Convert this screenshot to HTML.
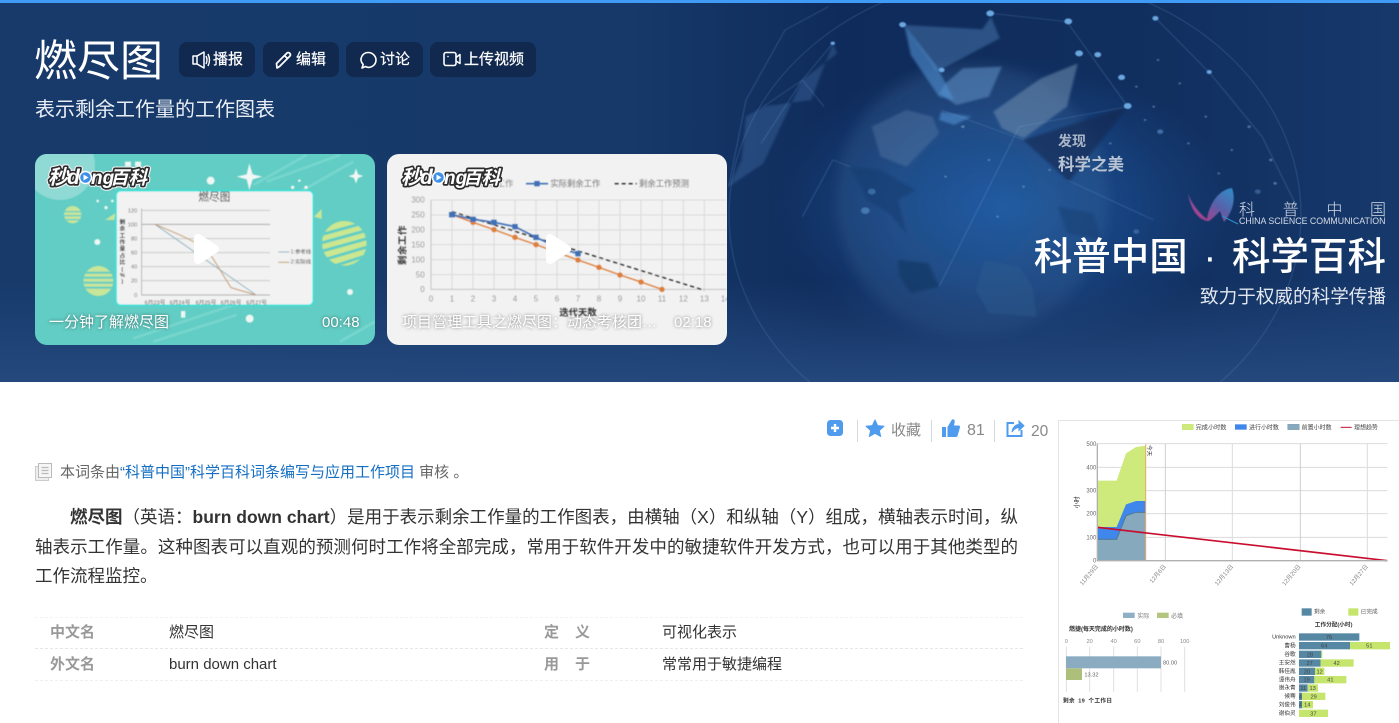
<!DOCTYPE html>
<html lang="zh"><head><meta charset="utf-8"><title>燃尽图</title>
<style>
*{box-sizing:border-box}
html,body{margin:0;padding:0;width:1399px;height:723px;overflow:hidden;background:#fff}
body{position:relative;font-family:"Liberation Sans","Noto Sans CJK SC",sans-serif;color:#333}
.a{position:absolute;white-space:nowrap}
.hero{position:absolute;left:0;top:0;width:1399px;height:382px;overflow:hidden;background:#163a6b}
.btn{position:absolute;top:42px;height:35px;border-radius:8px;background:#11294f}
.btxt{position:absolute;top:42px;line-height:36px;font-size:15px;color:#fff;white-space:nowrap;-webkit-text-stroke:.2px #fff}
.ct{position:absolute;color:#fff;font-size:15px;line-height:20px;white-space:nowrap;text-shadow:0 0 3px rgba(0,0,0,.5)}
.line{position:absolute;left:35px;width:983px;font-size:17.5px;line-height:30px;height:30px;color:#333;text-align:justify;text-align-last:justify;white-space:nowrap}
.lb{position:absolute;font-size:15px;font-weight:bold;color:#999;line-height:20px;white-space:nowrap}
.val{position:absolute;font-size:15px;color:#333;line-height:20px;white-space:nowrap}
.dot{position:absolute;left:35px;width:988px;height:0;border-top:1px dashed #e6e6e6}
.sep{position:absolute;top:420px;width:1px;height:22px;background:#d5d8dc}
svg text{font-family:"Liberation Sans","Noto Sans CJK SC",sans-serif}
</style></head><body>
<div class="hero">
<svg width="1399" height="382" viewBox="0 0 1399 382" style="position:absolute;left:0;top:0">
<defs>
<linearGradient id="bg" x1="0" x2="1" y1="0" y2="0"><stop offset="0" stop-color="#173a6b"/><stop offset=".45" stop-color="#16396a"/><stop offset=".6" stop-color="#0f2b5b"/><stop offset=".8" stop-color="#102e5e"/><stop offset="1" stop-color="#16386b"/></linearGradient>
<linearGradient id="bot" x1="0" x2="0" y1="0" y2="1"><stop offset="0" stop-color="#25497e" stop-opacity="0"/><stop offset="1" stop-color="#25497e" stop-opacity=".95"/></linearGradient>
<radialGradient id="glow"><stop offset="0" stop-color="#1f5ea8" stop-opacity=".95"/><stop offset=".55" stop-color="#1b4f93" stop-opacity=".6"/><stop offset="1" stop-color="#1b4a8a" stop-opacity="0"/></radialGradient>
<radialGradient id="globe" cx=".5" cy=".5" r=".5"><stop offset="0" stop-color="#1f5aa0" stop-opacity=".4"/><stop offset=".8" stop-color="#3a6496" stop-opacity=".28"/><stop offset="1" stop-color="#4a709c" stop-opacity=".22"/></radialGradient>
<filter id="b1" x="-10%" y="-10%" width="120%" height="120%"><feGaussianBlur stdDeviation="3"/></filter>
<filter id="b05"><feGaussianBlur stdDeviation="1.2"/></filter>
<filter id="bw"><feGaussianBlur stdDeviation=".4"/></filter>
<filter id="bg8" x="-20%" y="-20%" width="140%" height="140%"><feGaussianBlur stdDeviation="6"/></filter>
<clipPath id="c1"><rect x="35" y="154" width="340" height="191" rx="12"/></clipPath>
<clipPath id="c2"><rect x="387" y="154" width="340" height="191" rx="12"/></clipPath>
<linearGradient id="wing" x1="0" x2="1" y1="1" y2="0"><stop offset="0" stop-color="#d6327f"/><stop offset=".55" stop-color="#5a5fa8"/><stop offset="1" stop-color="#2e8fc9"/></linearGradient>
</defs>
<rect width="1399" height="382" fill="url(#bg)"/>
<ellipse cx="1002" cy="207" rx="230" ry="150" fill="url(#glow)"/>
<circle cx="972" cy="200" r="136" fill="url(#globe)" filter="url(#bg8)"/>
<rect x="0" y="280" width="1399" height="102" fill="url(#bot)"/>
<!-- globe -->
<g transform="translate(720 0) scale(.4337 .3333)" filter="url(#b1)">
<path d="M520 250L560 205 650 200 620 290 545 315 505 280Z" fill="#5c8bc0" fill-opacity=".6"/>
<path d="M630 335L690 280 740 235 825 190 800 320 700 415 650 385Z" fill="#6f8eaf" fill-opacity=".55"/>
<path d="M425 75L500 200 540 300 505 290 440 165Z" fill="#4f8fd0" fill-opacity=".6"/>
<path d="M425 75L605 88 625 50 645 115 500 215Z" fill="#5a8fc9" fill-opacity=".38"/>
<path d="M700 420L940 320 805 545Z" fill="#10274f" fill-opacity=".6"/>
<path d="M350 380L430 330 490 350 505 400 430 500 370 470Z" fill="#6a8cb0" fill-opacity=".32"/>
<path d="M510 335L580 350 540 375 505 360Z" fill="#4f8fd0" fill-opacity=".6"/>
<path d="M300 500L370 510 450 570 410 600 430 700 390 640 340 600Z" fill="#143a72" fill-opacity=".6"/>
<path d="M410 780L480 790 505 860 440 880 415 830Z" fill="#153765" fill-opacity=".7"/>
<path d="M610 780L690 800 720 860 730 950 620 940 590 870Z" fill="#2f5b8e" fill-opacity=".45"/>
<path d="M780 620L860 640 880 720 800 700Z" fill="#173c70" fill-opacity=".5"/>
<path d="M260 130L210 300 100 320 60 350 50 480 20 560 100 490 190 240 270 160Z" fill="#5a90c8" fill-opacity=".26"/>
</g>
<g transform="translate(720 0) scale(.4337 .3333)" filter="url(#b05)">
<path d="M250 20L150 90 60 300 20 560M260 130L190 240 100 320M190 240L240 320M95 430L190 240M505 860L690 380 940 320M800 540L1000 660M700 420L510 330M1005 55L1130 220 1250 410 1330 620M625 40L800 65 940 320M190 650L260 480 300 500" fill="none" stroke="#7fb0e2" stroke-opacity=".3" stroke-width="2"/>
<g fill="#6aa6e0">
<circle cx="623" cy="40" r="9"/><circle cx="803" cy="64" r="9"/><circle cx="421" cy="74" r="8"/><circle cx="828" cy="160" r="9"/><circle cx="871" cy="164" r="8"/><circle cx="926" cy="232" r="8"/><circle cx="940" cy="318" r="9"/><circle cx="511" cy="210" r="7"/><circle cx="1004" cy="55" r="7"/><circle cx="1128" cy="216" r="6"/><circle cx="260" cy="130" r="5"/><circle cx="335" cy="632" r="10" fill-opacity=".5"/><circle cx="350" cy="575" r="9" fill-opacity=".4"/><circle cx="1240" cy="575" r="7" fill-opacity=".35"/><circle cx="1015" cy="395" r="7" fill-opacity=".5"/><circle cx="960" cy="695" r="7" fill-opacity=".35"/>
</g>
<g fill="#9cc4ea" fill-opacity=".45">
<circle cx="960" cy="260" r="3"/><circle cx="1000" cy="320" r="3"/><circle cx="1060" cy="250" r="3"/><circle cx="1080" cy="430" r="3"/><circle cx="1120" cy="350" r="3"/><circle cx="1180" cy="450" r="3"/><circle cx="1010" cy="180" r="3"/><circle cx="900" cy="430" r="3"/><circle cx="880" cy="500" r="3"/><circle cx="1150" cy="520" r="3"/><circle cx="1220" cy="380" r="4"/><circle cx="1270" cy="480" r="4"/><circle cx="1280" cy="550" r="4"/><circle cx="560" cy="380" r="4"/><circle cx="620" cy="480" r="3"/><circle cx="520" cy="530" r="3"/><circle cx="700" cy="560" r="3"/><circle cx="760" cy="510" r="3"/><circle cx="640" cy="650" r="3"/><circle cx="980" cy="360" r="3"/>
</g>
</g>
<ellipse cx="1015" cy="215" rx="286" ry="240" fill="none" stroke="#6f9fd1" stroke-opacity=".16" stroke-width="1.5"/>
<!-- 科普 logo wing -->
<path d="M1188 193C1192 206 1203 216 1207 219 1209 206 1217 190 1232 188 1237 202 1230 215 1224 222L1220 211C1213 218 1209 222 1207 221 1199 219 1191 212 1188 193Z" fill="url(#wing)" filter="url(#bw)"/>
<path d="M1222 216L1238 224" stroke="#2e8fc9" stroke-width="1"/>
<!-- card1 -->
<g clip-path="url(#c1)">
<rect x="35" y="154" width="340" height="191" fill="#62cdc4"/>
<g transform="translate(20 145) scale(.33333)" filter="url(#b05)">
<circle cx="120" cy="60" r="105" fill="#8fdad5"/>
<g stroke="#85dcd4" stroke-width="8" stroke-opacity=".6"><path d="M700 120L860 30M740 110L960 30M840 140L1000 50M340 580L640 480M400 590L650 510M960 590L1065 530"/></g>
<path d="M650 95L680 88 688 55 698 88 727 95 698 103 688 135 680 103Z" fill="#f2f7f5"/>
<path d="M985 93L1002 88 1008 70 1014 88 1030 93 1014 99 1008 116 1002 99Z" fill="#f2f7f5"/>
<g fill="#eef7f4"><circle cx="232" cy="291" r="9"/><circle cx="990" cy="441" r="9"/><circle cx="689" cy="521" r="12"/><circle cx="572" cy="107" r="12"/><rect x="483" y="498" width="13" height="20"/><circle cx="233" cy="168" r="4"/><circle cx="258" cy="188" r="5"/><circle cx="277" cy="168" r="4"/><rect x="315" y="50" width="18" height="14"/><rect x="345" y="50" width="18" height="14"/><circle cx="838" cy="107" r="4"/><circle cx="818" cy="127" r="5"/><circle cx="858" cy="127" r="5"/></g>
<circle cx="158" cy="209" r="26" fill="#c8e59a"/>
<circle cx="235" cy="408" r="45" fill="#c8e59a"/>
<g fill="#62cdc4"><rect x="130" y="198" width="56" height="4"/><rect x="130" y="210" width="56" height="4"/><rect x="130" y="222" width="56" height="4"/><rect x="190" y="380" width="90" height="6"/><rect x="190" y="395" width="90" height="6"/><rect x="190" y="410" width="90" height="6"/><rect x="190" y="425" width="90" height="6"/></g>
<circle cx="973" cy="295" r="67" fill="#cbe78f"/>
<g stroke="#62cdc4" stroke-width="9"><path d="M900 270L1045 230M900 295L1045 255M900 320L1045 280M910 345L1045 305M920 370L1045 330"/></g>
<path d="M255 225L285 205 283 225Z" fill="#c8e59a"/><path d="M882 215L905 192 905 222Z" fill="#c8e59a"/>
<rect x="288" y="137" width="592" height="344" rx="14" fill="#f1f2f1" stroke="#37e3dc" stroke-width="5"/>
<text x="583" y="166" font-size="32" text-anchor="middle" fill="#222">燃尽图</text>
<g stroke="#c9c9c9" stroke-width="3"><path d="M365 196H750M365 281H750M365 323H750M365 365H750M365 407H750"/></g>
<path d="M365 238H750" stroke="#a6a6a6" stroke-width="3"/>
<path d="M365 190V450H750" fill="none" stroke="#999" stroke-width="2"/>
<path d="M405 238L708 450" stroke="#8db3c0" stroke-width="3" fill="none"/>
<path d="M405 238L485 272 560 310 633 428 708 450" stroke="#c79a68" stroke-width="3" fill="none"/>
<g font-size="17" fill="#666" text-anchor="end"><text x="352" y="202">120</text><text x="352" y="244">100</text><text x="352" y="287">80</text><text x="352" y="329">60</text><text x="352" y="371">40</text><text x="352" y="413">20</text><text x="352" y="456">0</text></g>
<g font-size="17" fill="#222" font-weight="bold" text-anchor="middle"><text x="307" y="237">剩</text><text x="307" y="257">余</text><text x="307" y="277">工</text><text x="307" y="297">作</text><text x="307" y="317">量</text><text x="307" y="337">占</text><text x="307" y="357">比</text><text x="307" y="378">(</text><text x="307" y="396">%</text><text x="307" y="414">)</text></g>
<g font-size="17" fill="#444" text-anchor="middle"><text x="405" y="478">6月23号</text><text x="480" y="478">6月24号</text><text x="558" y="478">6月25号</text><text x="633" y="478">6月26号</text><text x="710" y="478">6月27号</text></g>
<path d="M775 321H808" stroke="#8db3c0" stroke-width="3"/><path d="M775 352H808" stroke="#c79a68" stroke-width="3"/>
<text x="812" y="325" font-size="16" fill="#444">1:参考线</text><text x="812" y="356" font-size="16" fill="#444">2:实际线</text>
</g>
</g>
<!-- card2 -->
<g clip-path="url(#c2)">
<rect x="387" y="154" width="340" height="191" fill="#f2f2f2"/>
<g transform="translate(380 145) scale(.33333)" filter="url(#b05)">
<g stroke="#dadada" stroke-width="3" fill="none">
<path d="M153 165H1040M153 210H1040M153 255H1040M153 299H1040M153 344H1040M153 389H1040"/>
<path d="M216 165V433M279 165V433M342 165V433M405 165V433M468 165V433M531 165V433M594 165V433M657 165V433M720 165V433M783 165V433M846 165V433M910 165V433M973 165V433"/>
</g>
<path d="M153 165V433H1040" fill="none" stroke="#c4c4c4" stroke-width="3"/>
<path d="M216 200L973 436" stroke="#222" stroke-width="4" stroke-dasharray="13 9" fill="none"/>
<path d="M216 209L279 232 342 254 405 277 468 299 531 322 594 345 657 367 720 390 783 411 846 433" fill="none" stroke="#dd7e3a" stroke-width="4"/>
<g fill="#dd7e3a"><circle cx="279" cy="232" r="8"/><circle cx="342" cy="254" r="8"/><circle cx="405" cy="277" r="8"/><circle cx="468" cy="299" r="8"/><circle cx="594" cy="345" r="8"/><circle cx="657" cy="367" r="8"/><circle cx="720" cy="390" r="8"/><circle cx="783" cy="411" r="8"/><circle cx="846" cy="433" r="8"/></g>
<path d="M216 209L279 223 342 232 405 245 468 277 531 306 594 326" fill="none" stroke="#3f6fb5" stroke-width="5"/>
<g fill="#3f6fb5"><rect x="207" y="201" width="18" height="16"/><rect x="271" y="215" width="16" height="16"/><rect x="334" y="224" width="16" height="16"/><rect x="397" y="237" width="16" height="16"/><rect x="460" y="269" width="16" height="16"/><rect x="586" y="318" width="16" height="16"/></g>
<g font-size="24" fill="#9a9a9a" text-anchor="middle"><text x="153" y="469">0</text><text x="216" y="469">1</text><text x="279" y="469">2</text><text x="342" y="469">3</text><text x="405" y="469">4</text><text x="468" y="469">5</text><text x="531" y="469">6</text><text x="594" y="469">7</text><text x="657" y="469">8</text><text x="720" y="469">9</text><text x="783" y="469">10</text><text x="846" y="469">11</text><text x="910" y="469">12</text><text x="973" y="469">13</text><text x="1036" y="469">14</text></g>
<g font-size="24" fill="#9a9a9a" text-anchor="end"><text x="134" y="173">300</text><text x="134" y="218">250</text><text x="134" y="263">200</text><text x="134" y="308">150</text><text x="134" y="352">100</text><text x="134" y="397">50</text><text x="134" y="441">0</text></g>
<text transform="translate(76 360) rotate(-90)" font-size="28" font-weight="bold" fill="#333" letter-spacing="2">剩余工作</text>
<text x="594" y="511" font-size="28" font-weight="bold" fill="#333" text-anchor="middle">迭代天数</text>
<text x="250" y="124" font-size="25" fill="#888">理想剩余工作</text>
<path d="M438 116H504" stroke="#3f6fb5" stroke-width="5"/><rect x="463" y="108" width="16" height="16" fill="#3f6fb5"/>
<text x="511" y="124" font-size="25" fill="#777">实际剩余工作</text>
<path d="M704 116H770" stroke="#222" stroke-width="4" stroke-dasharray="12 9"/>
<text x="777" y="124" font-size="25" fill="#777">剩余工作预测</text>
</g>
</g>
<!-- watermark logos -->
<g id="wm" font-weight="bold" font-style="italic" stroke-linejoin="round">
<g stroke="#f4f4f4" stroke-width="5.500" fill="#f4f4f4">
<text x="48" y="184" font-size="20">秒</text><text x="67" y="184" font-size="21">d</text><text x="91" y="184" font-size="19">ng</text><text x="110" y="184" font-size="18.500">百科</text>
<text x="401" y="184" font-size="20">秒</text><text x="420" y="184" font-size="21">d</text><text x="444" y="184" font-size="19">ng</text><text x="463" y="184" font-size="18.500">百科</text>
</g>
<g stroke="#2d2d2d" stroke-width="3.400" fill="#2d2d2d">
<text x="48" y="184" font-size="20">秒</text><text x="67" y="184" font-size="21">d</text><text x="91" y="184" font-size="19">ng</text><text x="110" y="184" font-size="18.500">百科</text>
<text x="401" y="184" font-size="20">秒</text><text x="420" y="184" font-size="21">d</text><text x="444" y="184" font-size="19">ng</text><text x="463" y="184" font-size="18.500">百科</text>
</g>
<g fill="#fff">
<text x="48" y="184" font-size="20">秒</text><text x="67" y="184" font-size="21">d</text><text x="91" y="184" font-size="19">ng</text><text x="110" y="184" font-size="18.500">百科</text>
<text x="401" y="184" font-size="20">秒</text><text x="420" y="184" font-size="21">d</text><text x="444" y="184" font-size="19">ng</text><text x="463" y="184" font-size="18.500">百科</text>
</g>
</g>
<g><circle cx="85.500" cy="177.500" r="6" fill="#3d8fe8" stroke="#fff" stroke-width="1.500"/><path d="M83.500 174.500L88.500 177.500 83.500 180.500Z" fill="#fff"/>
<circle cx="438.500" cy="177.500" r="6" fill="#3d8fe8" stroke="#fff" stroke-width="1.500"/><path d="M436.500 174.500L441.500 177.500 436.500 180.500Z" fill="#fff"/></g>
<!-- play -->
<path d="M198 238L215 249 198 260Z" fill="#fff" stroke="#fff" stroke-width="8" stroke-linejoin="round"/>
<path d="M550 238L567 249 550 260Z" fill="#fff" stroke="#fff" stroke-width="8" stroke-linejoin="round"/>
</svg>
<div class="a" style="left:1058px;top:133px;font-size:14px;line-height:16px;color:#a9b6c8;font-weight:bold">发现</div>
<div class="a" style="left:1058px;top:156px;font-size:16.500px;line-height:18px;color:#b7c2d2;font-weight:bold">科学之美</div>
<div class="a" style="left:1239px;top:202px;width:147px;font-size:16px;line-height:18px;color:#d5dde8;font-weight:300;display:flex;justify-content:space-between"><span>科</span><span>普</span><span>中</span><span>国</span></div>
<div class="a" style="left:1239px;top:215px;font-size:8.800px;line-height:12px;color:#d5dde8">CHINA SCIENCE COMMUNICATION</div>
<div class="a" style="right:13px;top:235px;font-size:38.500px;line-height:46px;color:#fff;font-weight:500;word-spacing:5px">科普中国 · 科学百科</div>
<div class="a" style="right:13px;top:285px;font-size:18.600px;line-height:24px;color:#e2e7ef">致力于权威的科学传播</div>
<div class="a" style="left:34px;top:32px;font-size:43px;line-height:60px;color:#fff">燃尽图</div>
<div class="a" style="left:35px;top:96px;font-size:20px;line-height:28px;color:#e9eef5">表示剩余工作量的工作图表</div>
<div class="btn" style="left:179px;width:76px"></div>
<div class="btn" style="left:263px;width:76px"></div>
<div class="btn" style="left:346px;width:77px"></div>
<div class="btn" style="left:430px;width:106px"></div>
<svg width="1399" height="100" style="position:absolute;left:0;top:0" fill="none" stroke="#fff">
<path d="M193 56V64H197L204 68V52L197 56ZM197 56V64" stroke-width="1.500" stroke-linejoin="round"/><path d="M206 56Q208 60 206 64M208 54Q211 60 208 66" stroke-width="1.400"/>
<path d="M277 68L276.500 63.500 287 53C288.500 51.500 291.500 54 290 56L279.500 66.500Z M284.500 55.500L288 59" stroke-width="1.700" stroke-linejoin="round"/>
<path d="M362 68L363.200 64.500C358 59 363 52.500 368 52.500 373 52.500 376 56.500 376 60 376 65.500 370 69 365.500 66.500Z" stroke-width="1.600" stroke-linejoin="round"/>
<rect x="444" y="52.500" width="12" height="13" rx="2" stroke-width="1.600"/><path d="M456 57.500L460 54.500V63.500L456 61" stroke-width="1.500" stroke-linejoin="round"/><circle cx="448" cy="56.500" r=".8" fill="#fff" stroke="none"/>
</svg>
<div class="btxt" style="left:213px">播报</div>
<div class="btxt" style="left:296px">编辑</div>
<div class="btxt" style="left:380px">讨论</div>
<div class="btxt" style="left:464px">上传视频</div>
<div class="ct" style="left:49px;top:313px">一分钟了解燃尽图</div>
<div class="ct" style="left:322px;top:313px">00:48</div>
<div class="ct" style="left:402px;top:313px">项目管理工具之燃尽图：动态考核团…</div>
<div class="ct" style="left:674px;top:313px">02:18</div>
</div>
<div style="position:absolute;left:0;top:0;width:1399px;height:3px;background:#3f9bf6"></div>

<!-- action row -->
<svg width="240" height="30" viewBox="0 0 240 30" style="position:absolute;left:820px;top:415px">
<rect x="7" y="5" width="16" height="16" rx="3.500" fill="#4f9cee"/><path d="M15 9V17M11 13H19" stroke="#fff" stroke-width="2.400"/>
<path d="M55 5L57.600 10.600 64 11.300 59.300 15.500 60.700 21.500 55 18.300 49.300 21.500 50.700 15.500 46 11.300 52.400 10.600Z" fill="#4f9cee" stroke="#4f9cee" stroke-linejoin="round"/>
<path d="M122 12H126V22H122ZM127.500 12L132 4.500C134 3.500 135 5.500 134.700 7L134 10.500H138.500C140 10.500 140.300 12 139.800 13L137.500 21C137 22 136 22 135 22H127.500Z" fill="#4f9cee"/>
<path d="M194 8H187.500V21H201.500V15" fill="none" stroke="#4f9cee" stroke-width="2"/><path d="M192 17C192.500 12 196 9.500 199 9.500V6L204 10.700 199 15.500V12.500C196 12.500 194 14 192 17Z" fill="#4f9cee" stroke="#4f9cee"/>
</svg>
<div class="sep" style="left:857px"></div><div class="sep" style="left:931px"></div><div class="sep" style="left:994px"></div>
<div class="a" style="left:891px;top:421px;font-size:15px;line-height:20px;color:#888">收藏</div>
<div class="a" style="left:967px;top:421px;font-size:16px;line-height:20px;color:#888">81</div>
<div class="a" style="left:1031px;top:422px;font-size:15.500px;line-height:20px;color:#888">20</div>

<!-- review -->
<svg width="20" height="20" style="position:absolute;left:34px;top:462px"><rect x="1.500" y="4.500" width="13" height="14" fill="#eee" stroke="#ccc"/><rect x="4.500" y="1.500" width="13" height="14" fill="#f6f6f6" stroke="#bbb"/><path d="M7.500 5.500H14.500M7.500 8.500H14.500M7.500 11.500H14.500" stroke="#bbb" stroke-width="1.300"/></svg>
<div class="a" style="left:60px;top:463px;font-size:15px;line-height:20px;color:#666">本词条由<span style="color:#136ec2">“科普中国”科学百科词条编写与应用工作项目</span> 审核 。</div>

<!-- para -->
<div class="line" style="top:502px;padding-left:35px"><b>燃尽图</b>（英语：<b>burn down chart</b>）是用于表示剩余工作量的工作图表，由横轴（X）和纵轴（Y）组成，横轴表示时间，纵</div>
<div class="line" style="top:532px">轴表示工作量。这种图表可以直观的预测何时工作将全部完成，常用于软件开发中的敏捷软件开发方式，也可以用于其他类型的</div>
<div class="line" style="top:561px;text-align:left;text-align-last:left">工作流程监控。</div>

<!-- table -->
<div class="dot" style="top:617px;border-color:#f3f3f3"></div>
<div class="dot" style="top:648px"></div>
<div class="dot" style="top:680px;border-color:#efefef"></div>
<div class="lb" style="left:50px;top:623px">中文名</div><div class="val" style="left:169px;top:623px">燃尽图</div>
<div class="lb" style="left:544px;top:623px;letter-spacing:16px">定义</div><div class="val" style="left:662px;top:623px">可视化表示</div>
<div class="lb" style="left:50px;top:655px">外文名</div><div class="val" style="left:169px;top:655px">burn down chart</div>
<div class="lb" style="left:544px;top:655px;letter-spacing:16px">用于</div><div class="val" style="left:662px;top:655px">常常用于敏捷编程</div>

<!-- right image -->
<svg width="341" height="303" viewBox="1058 420 341 303" style="position:absolute;left:1058px;top:420px">
<defs><filter id="b05r"><feGaussianBlur stdDeviation=".35"/></filter></defs>
<rect x="1058" y="420" width="341" height="303" fill="#fff"/>
<path d="M1058.500 723V420.500H1399" fill="none" stroke="#e4e4e4"/>
<g filter="url(#b05r)">
<g transform="translate(1055 415) scale(.33333)">
<g stroke="#dcdcdc" stroke-width="3"><path d="M127 86H997M127 157H997M127 227H997M127 296H997M127 367H997"/><path d="M532 86V437M937 86V437"/></g>
<path d="M331 86V437M736 86V437" stroke="#cfcfcf" stroke-width="3"/>
<path d="M127 197L185 197 213 115 243 96 272 92V437H127Z" fill="#cfea7c"/>
<path d="M127 336L185 336 213 268 243 258 272 258V437H127Z" fill="#3f87ec"/>
<path d="M127 373L185 373 213 302 243 292 272 292V437H127Z" fill="#86a9bd"/>
<path d="M127 373L185 373 213 302 243 292 272 292" fill="none" stroke="#4f7a94" stroke-width="3"/>
<path d="M272 88V437" stroke="#e8a868" stroke-width="3"/>
<path d="M127 337L997 437" stroke="#c8102e" stroke-width="5"/>
<path d="M127 86V437H997" fill="none" stroke="#b0b0b0" stroke-width="4"/>
<g font-size="18" fill="#666" text-anchor="end"><text x="124" y="93">500</text><text x="124" y="163">400</text><text x="124" y="233">300</text><text x="124" y="302">200</text><text x="124" y="373">100</text><text x="124" y="443">0</text></g>
<text transform="translate(72 280) rotate(-90)" font-size="18" fill="#222">小时</text>
<text transform="translate(277 90) rotate(90)" font-size="17" fill="#333">今天</text>
<g font-size="18" fill="#888" text-anchor="end"><text transform="translate(130 455) rotate(-50)">11月29日</text><text transform="translate(334 455) rotate(-50)">12月6日</text><text transform="translate(536 455) rotate(-50)">12月13日</text><text transform="translate(738 455) rotate(-50)">12月20日</text><text transform="translate(940 455) rotate(-50)">12月27日</text></g>
<rect x="382" y="28" width="33" height="16" fill="#cfea7c" stroke="#b8dc50"/><text x="422" y="44" font-size="18.500" fill="#444">完成小时数</text>
<rect x="540" y="28" width="35" height="16" fill="#3f87ec"/><text x="582" y="44" font-size="18" fill="#444">进行小时数</text>
<rect x="698" y="28" width="35" height="16" fill="#86a9bd" stroke="#5d87a0"/><text x="740" y="44" font-size="18" fill="#444">前置小时数</text>
<path d="M857 37H890" stroke="#c8102e" stroke-width="3"/><text x="897" y="44" font-size="18" fill="#444">理想趋势</text>
</g>
<g transform="translate(1055 600) scale(.33333)">
<rect x="204" y="38" width="35" height="16" fill="#8fb0c4"/><text x="247" y="54" font-size="18" fill="#777">实际</text>
<rect x="306" y="38" width="35" height="16" fill="#b3c57f"/><text x="348" y="54" font-size="18" fill="#777">必填</text>
<text x="42" y="93" font-size="18" font-weight="bold" fill="#333">燃捷(每天完成的小时数)</text>
<g font-size="17" fill="#888" text-anchor="middle"><text x="34" y="129">0</text><text x="104" y="129">20</text><text x="176" y="129">40</text><text x="247" y="129">60</text><text x="318" y="129">80</text><text x="389" y="129">100</text></g>
<g stroke="#e0e0e0" stroke-width="3"><path d="M34 140V276M104 140V276M176 140V276M247 140V276M318 140V276M389 140V276"/></g>
<rect x="33" y="169" width="285" height="36" fill="#8aabc0"/>
<rect x="33" y="205" width="48" height="35" fill="#aebf7c"/>
<text x="324" y="194" font-size="17" fill="#666">80.00</text><text x="88" y="230" font-size="17" fill="#666">13.32</text>
<text x="24" y="307" font-size="17" font-weight="bold" fill="#333" letter-spacing="1" word-spacing="4">剩余 19 个工作日</text>
<rect x="740" y="25" width="30" height="22" fill="#5688a4"/><text x="777" y="41" font-size="17" fill="#555">剩余</text>
<rect x="880" y="25" width="30" height="22" fill="#c5e56c"/><text x="917" y="41" font-size="17" fill="#555">已完成</text>
<text x="836" y="79" font-size="17" font-weight="bold" fill="#333" text-anchor="middle">工作分配(小时)</text>
<g fill="#5688a4"><rect x="732" y="100" width="181" height="22"/><rect x="732" y="126" width="153" height="22"/><rect x="732" y="152" width="67" height="22"/><rect x="732" y="178" width="65" height="22"/><rect x="732" y="203" width="48" height="22"/><rect x="732" y="228" width="46" height="22"/><rect x="732" y="253" width="26" height="22"/><rect x="732" y="278" width="9" height="22"/><rect x="732" y="303" width="9" height="22"/></g>
<g fill="#c5e56c"><rect x="885" y="126" width="120" height="22"/><rect x="799" y="152" width="3" height="22"/><rect x="797" y="178" width="99" height="22"/><rect x="780" y="203" width="28" height="22"/><rect x="778" y="228" width="96" height="22"/><rect x="758" y="253" width="31" height="22"/><rect x="741" y="278" width="70" height="22"/><rect x="741" y="303" width="33" height="22"/><rect x="732" y="329" width="87" height="22"/></g>
<g font-size="17" fill="#444" text-anchor="middle"><text x="822" y="117">76</text><text x="808" y="143">64</text><text x="943" y="143">51</text><text x="765" y="169">28</text><text x="764" y="195">27</text><text x="845" y="195">42</text><text x="756" y="220">20</text><text x="794" y="220">12</text><text x="755" y="245">19</text><text x="826" y="245">41</text><text x="745" y="270">11</text><text x="773" y="270">13</text><text x="736" y="295">4</text><text x="776" y="295">29</text><text x="736" y="320">4</text><text x="757" y="320">14</text><text x="775" y="346">37</text></g>
<g font-size="17" fill="#333" text-anchor="end"><text x="722" y="116">Unknown</text><text x="722" y="142">曹杨</text><text x="722" y="168">谷歌</text><text x="722" y="194">王安然</text><text x="722" y="219">韩佳胤</text><text x="722" y="244">谭伟舟</text><text x="722" y="269">谢永青</text><text x="722" y="294">候骞</text><text x="722" y="319">刘俊伟</text><text x="722" y="345">谢伯灵</text></g>
</g>
</g>
</svg>
</body></html>
